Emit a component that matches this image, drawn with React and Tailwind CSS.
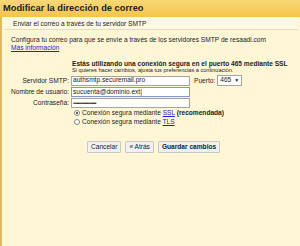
export default function App() {
  const f = { fontFamily: '"Liberation Sans", Arial, sans-serif' };
  return (
    <div style={f} className="w-[300px] h-[246px] bg-[#fff6d5] flex flex-col overflow-hidden text-[#222] whitespace-nowrap">
      <div className="h-[17px] bg-[#f6cb55] bg-gradient-to-b from-[#f9d878] to-[#f3c447] flex items-center pl-[3px] text-[9.3px] font-bold text-[#222]">
        Modificar la dirección de correo
      </div>
      <div className="flex-1 flex border-l-[2px] border-[#e2bd55]">
        <div className="flex-1 flex flex-col">
          <div className="h-[13px] mx-[2px] bg-[#fff9e4] border-b border-[#e6dcc0] flex items-center pl-[9px] pt-[1px] text-[6.6px]">
            Enviar el correo a través de tu servidor SMTP
          </div>
          <div className="pl-[9px] pt-[6px] text-[6.6px] leading-[8px]">
            <div>Configura tu correo para que se envíe a través de los servidores SMTP de resaadi.com</div>
            <div className="text-[#2222cc] underline">Más información</div>
          </div>
          <div className="pl-[70px] pt-[8px] leading-[7px]">
            <div className="text-[6.6px] font-bold">Estás utilizando una conexión segura en el puerto 465 mediante SSL</div>
            <div className="text-[5.6px]">Si quieres hacer cambios, ajusta tus preferencias a continuación.</div>
          </div>
          <div className="flex flex-col gap-[1px] pt-[1px] text-[6.6px]">
            <div className="flex items-center">
              <div className="w-[69px] text-right pr-[2px]">Servidor SMTP:</div>
              <div className="w-[119px] h-[10px] bg-white border border-[#a5a5a5] flex items-center pl-[1px] leading-none">authsmtp.securemail.pro</div>
              <div className="pl-[4px] pr-[2px]">Puerto:</div>
              <div className="h-[11px] bg-white border border-[#a5a5a5] flex items-center px-[2px] gap-[3px] leading-none">465 <span className="text-[5px]">▼</span></div>
            </div>
            <div className="flex items-center">
              <div className="w-[69px] text-right pr-[2px]">Nombre de usuario:</div>
              <div className="w-[119px] h-[10px] bg-white border border-[#7c9cc7] flex items-center pl-[1px] leading-none">sucuenta@dominio.ext|</div>
            </div>
            <div className="flex items-center">
              <div className="w-[69px] text-right pr-[2px]">Contraseña:</div>
              <div className="w-[119px] h-[10px] bg-white border border-[#a5a5a5] flex items-center pl-[1px] leading-none text-[5px] tracking-[-0.6px]">••••••••••••••••••••</div>
            </div>
          </div>
          <div className="pl-[72px] pt-[0px] flex flex-col text-[6.6px] leading-[9px]">
            <div className="flex items-center gap-[2px]">
              <span className="w-[6px] h-[6px] rounded-full border border-[#888] bg-white flex items-center justify-center"><span className="w-[2px] h-[2px] rounded-full bg-[#333]" /></span>
              <span>Conexión segura mediante <span className="text-[#2222cc] underline">SSL</span> <b>(recomendada)</b></span>
            </div>
            <div className="flex items-center gap-[2px]">
              <span className="w-[6px] h-[6px] rounded-full border border-[#888] bg-white" />
              <span>Conexión segura mediante <span className="text-[#2222cc] underline">TLS</span></span>
            </div>
          </div>
          <div className="pl-[85px] pt-[15px] flex gap-[4px] text-[6.6px]">
            <button className="h-[12px] px-[3px] bg-[#f1f1f1] border border-[#c8c8c8] rounded-[1px] leading-none">Cancelar</button>
            <button className="h-[12px] px-[3px] bg-[#f1f1f1] border border-[#c8c8c8] rounded-[1px] leading-none">« Atrás</button>
            <button className="h-[12px] px-[3px] bg-[#f1f1f1] border border-[#c8c8c8] rounded-[1px] leading-none font-bold">Guardar cambios</button>
          </div>
        </div>
      </div>
    </div>
  );
}
